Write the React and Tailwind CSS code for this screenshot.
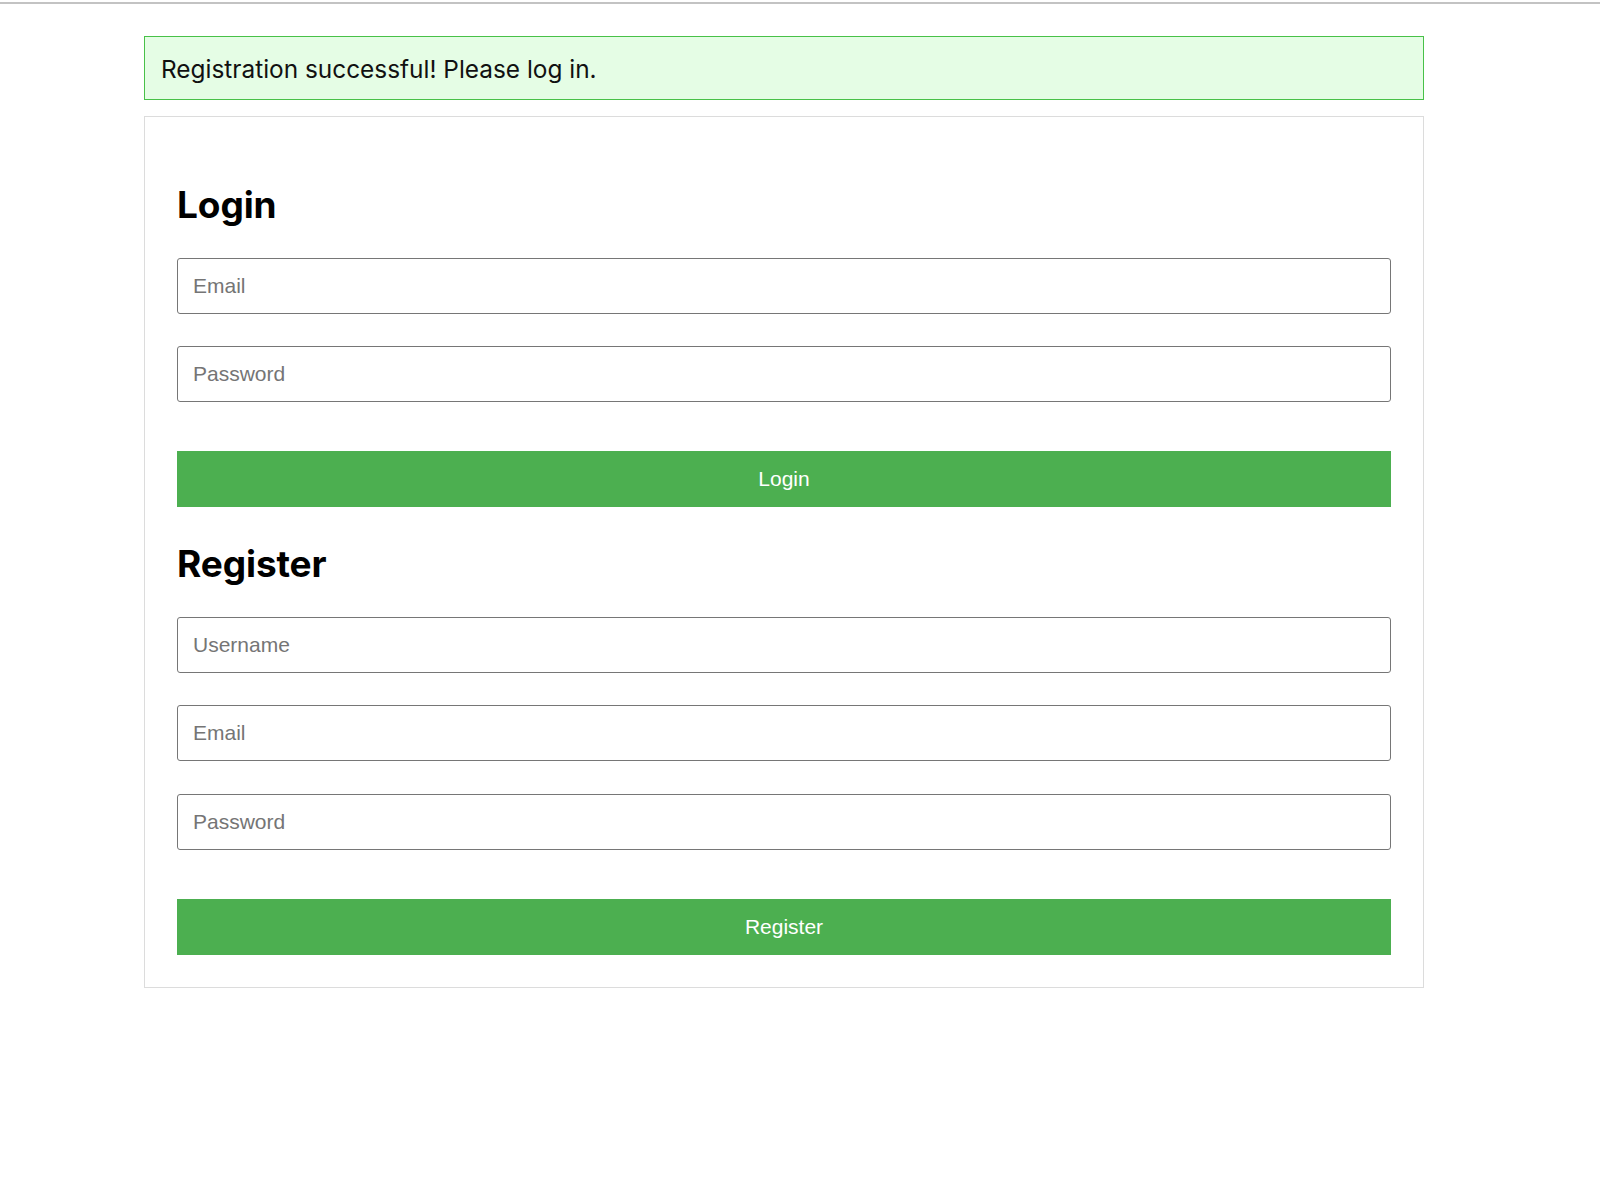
// App.jsx

const inputCls =
  "block w-full h-[56px] rounded-[3px] border border-[#767676] bg-white px-[15px] text-[21px] text-black outline-0 placeholder:text-[#757575] font-['Liberation_Sans',Arial,sans-serif]";

const buttonCls =
  "block w-full h-[56px] bg-[#4caf50] text-white text-[21px] font-['Liberation_Sans',Arial,sans-serif]";

const headingCls =
  "text-[37px] leading-[44px] font-bold text-black tracking-[-0.1px] font-['Inter','Noto_Sans',sans-serif]";

const App = () => {
  return (
    <div className="min-h-[1200px] w-full bg-white">
      {/* Top rule */}
      <div className="pt-[2px]">
        <div className="h-[1.5px] w-full bg-[#c3c3c3]" />
      </div>

      <div className="ml-[144px] w-[1280px] pt-[32px]">
        {/* Flash */}
        <div className="flex h-[64px] items-center border border-[#48c148] bg-[#e5fde5] px-[16px] pt-[4px] text-[24.4px] text-[#111] font-['Inter','Noto_Sans',sans-serif]">
          Registration successful! Please log in.
        </div>

        {/* Card */}
        <div className="mt-[16px] border border-[#dcdcdc] bg-white px-[32px] py-[32px]">
          {/* Login */}
          <h2 className={`${headingCls} mt-[34px] mb-[31px]`}>Login</h2>
          <input type="email" placeholder="Email" className={inputCls} />
          <input type="password" placeholder="Password" className={`${inputCls} mt-[32px]`} />
          <button className={`${buttonCls} mt-[49px]`}>Login</button>

          {/* Register */}
          <h2 className={`${headingCls} mt-[35px] mb-[31px]`}>Register</h2>
          <input type="text" placeholder="Username" className={inputCls} />
          <input type="email" placeholder="Email" className={`${inputCls} mt-[32px]`} />
          <input type="password" placeholder="Password" className={`${inputCls} mt-[33px]`} />
          <button className={`${buttonCls} mt-[49px]`}>Register</button>
        </div>
      </div>
    </div>
  );
};

export default App;
